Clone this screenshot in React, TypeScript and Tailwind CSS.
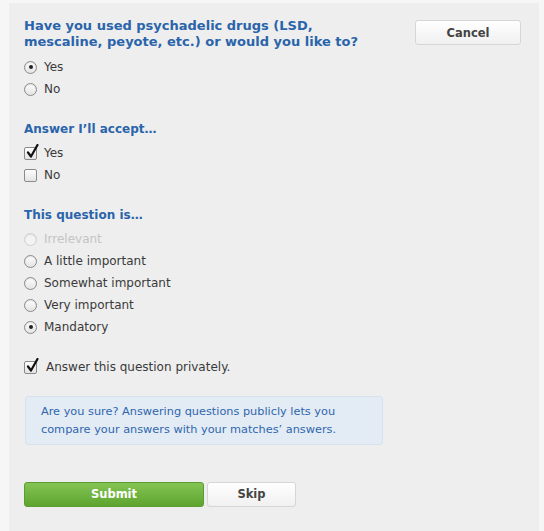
import React from "react";

const font = { fontFamily: '"DejaVu Sans", Verdana, sans-serif' };

function Radio({ checked, disabled }: { checked?: boolean; disabled?: boolean }) {
  return (
    <span
      className={`relative inline-flex h-[13px] w-[13px] shrink-0 items-center justify-center rounded-full border ${
        disabled ? "border-[#cfcfcf] bg-[#f3f3f3]" : "border-[#8a8a8a] bg-gradient-to-b from-[#fdfdfd] to-[#e4e4e4]"
      } shadow-[inset_0_1px_1px_rgba(0,0,0,0.1)]`}
    >
      {checked && <span className="h-[4px] w-[4px] rounded-full bg-[#222]" />}
    </span>
  );
}

function Check({ checked }: { checked?: boolean }) {
  return (
    <span className="relative inline-block h-[13px] w-[13px] shrink-0 rounded-[2px] border border-[#8a8a8a] bg-gradient-to-b from-[#fdfdfd] to-[#e4e4e4]">
      {checked && (
        <svg className="absolute left-[1px] top-[-4px]" width="13" height="15" viewBox="0 0 13 15">
          <path d="M2 8.5 L5 12.5 L11.5 1" fill="none" stroke="#111" strokeWidth="2.2" strokeLinecap="round" strokeLinejoin="round" />
        </svg>
      )}
    </span>
  );
}

function RadioRow({ label, checked, disabled }: { label: string; checked?: boolean; disabled?: boolean }) {
  return (
    <div className="flex h-[22px] items-center gap-[7px]">
      <Radio checked={checked} disabled={disabled} />
      <span className={`text-[12px] ${disabled ? "text-[#c4c4c4]" : "text-[#3a3a3a]"}`}>{label}</span>
    </div>
  );
}

function CheckRow({ label, checked }: { label: string; checked?: boolean }) {
  return (
    <div className="flex h-[22px] items-center gap-[7px]">
      <Check checked={checked} />
      <span className="text-[12px] text-[#3a3a3a]">{label}</span>
    </div>
  );
}

export default function App() {
  return (
    <div className="min-h-[531px] w-[544px] bg-[#f6f6f6] pl-[9px] pr-[5px] pt-[3px]" style={font}>
      <div className="min-h-[528px] bg-[#eeeeee] pl-[15px] pr-[18px] pt-[15px]">
        <div className="flex items-start justify-between">
          <h1 className="text-[13px] font-bold leading-[16px] text-[#2a64aa]">
            Have you used psychadelic drugs (LSD,
            <br />
            mescaline, peyote, etc.) or would you like to?
          </h1>
          <button className="mt-[2px] h-[25px] w-[106px] rounded-[3px] border border-[#d6d6d6] bg-gradient-to-b from-[#ffffff] to-[#f0f0f0] pt-[2px] text-[11.5px] font-bold text-[#444]">
            Cancel
          </button>
        </div>
        <div className="mt-[6px]">
          <RadioRow label="Yes" checked />
          <RadioRow label="No" />
        </div>

        <h2 className="mt-[20px] text-[12px] font-bold leading-[18px] text-[#2a64aa]">Answer I’ll accept…</h2>
        <div className="mt-[4px]">
          <CheckRow label="Yes" checked />
          <CheckRow label="No" />
        </div>

        <h2 className="mt-[20px] text-[12px] font-bold leading-[18px] text-[#2a64aa]">This question is…</h2>
        <div className="mt-[4px]">
          <RadioRow label="Irrelevant" disabled />
          <RadioRow label="A little important" />
          <RadioRow label="Somewhat important" />
          <RadioRow label="Very important" />
          <RadioRow label="Mandatory" checked />
        </div>

        <div className="mt-[18px] flex h-[22px] items-center gap-[9px]">
          <Check checked />
          <span className="text-[12px] text-[#3a3a3a]">Answer this question privately.</span>
        </div>

        <div className="ml-[1px] mt-[18px] w-[358px] rounded-[3px] border border-[#d8e2ee] bg-[#e3ebf5] px-[15px] pb-[5px] pt-[6px] text-[11.3px] leading-[18px] text-[#2f67ad]">
          Are you sure? Answering questions publicly lets you
          <br />
          compare your answers with your matches’ answers.
        </div>

        <div className="mt-[37px] flex gap-[3px]">
          <button className="h-[25px] w-[180px] rounded-[3px] border border-[#5c9c30] bg-gradient-to-b from-[#84c454] to-[#5ea42e] text-[11.5px] font-bold text-white">
            Submit
          </button>
          <button className="h-[25px] w-[89px] rounded-[3px] border border-[#d6d6d6] bg-gradient-to-b from-[#ffffff] to-[#f0f0f0] text-[11.5px] font-bold text-[#444]">
            Skip
          </button>
        </div>
      </div>
    </div>
  );
}
